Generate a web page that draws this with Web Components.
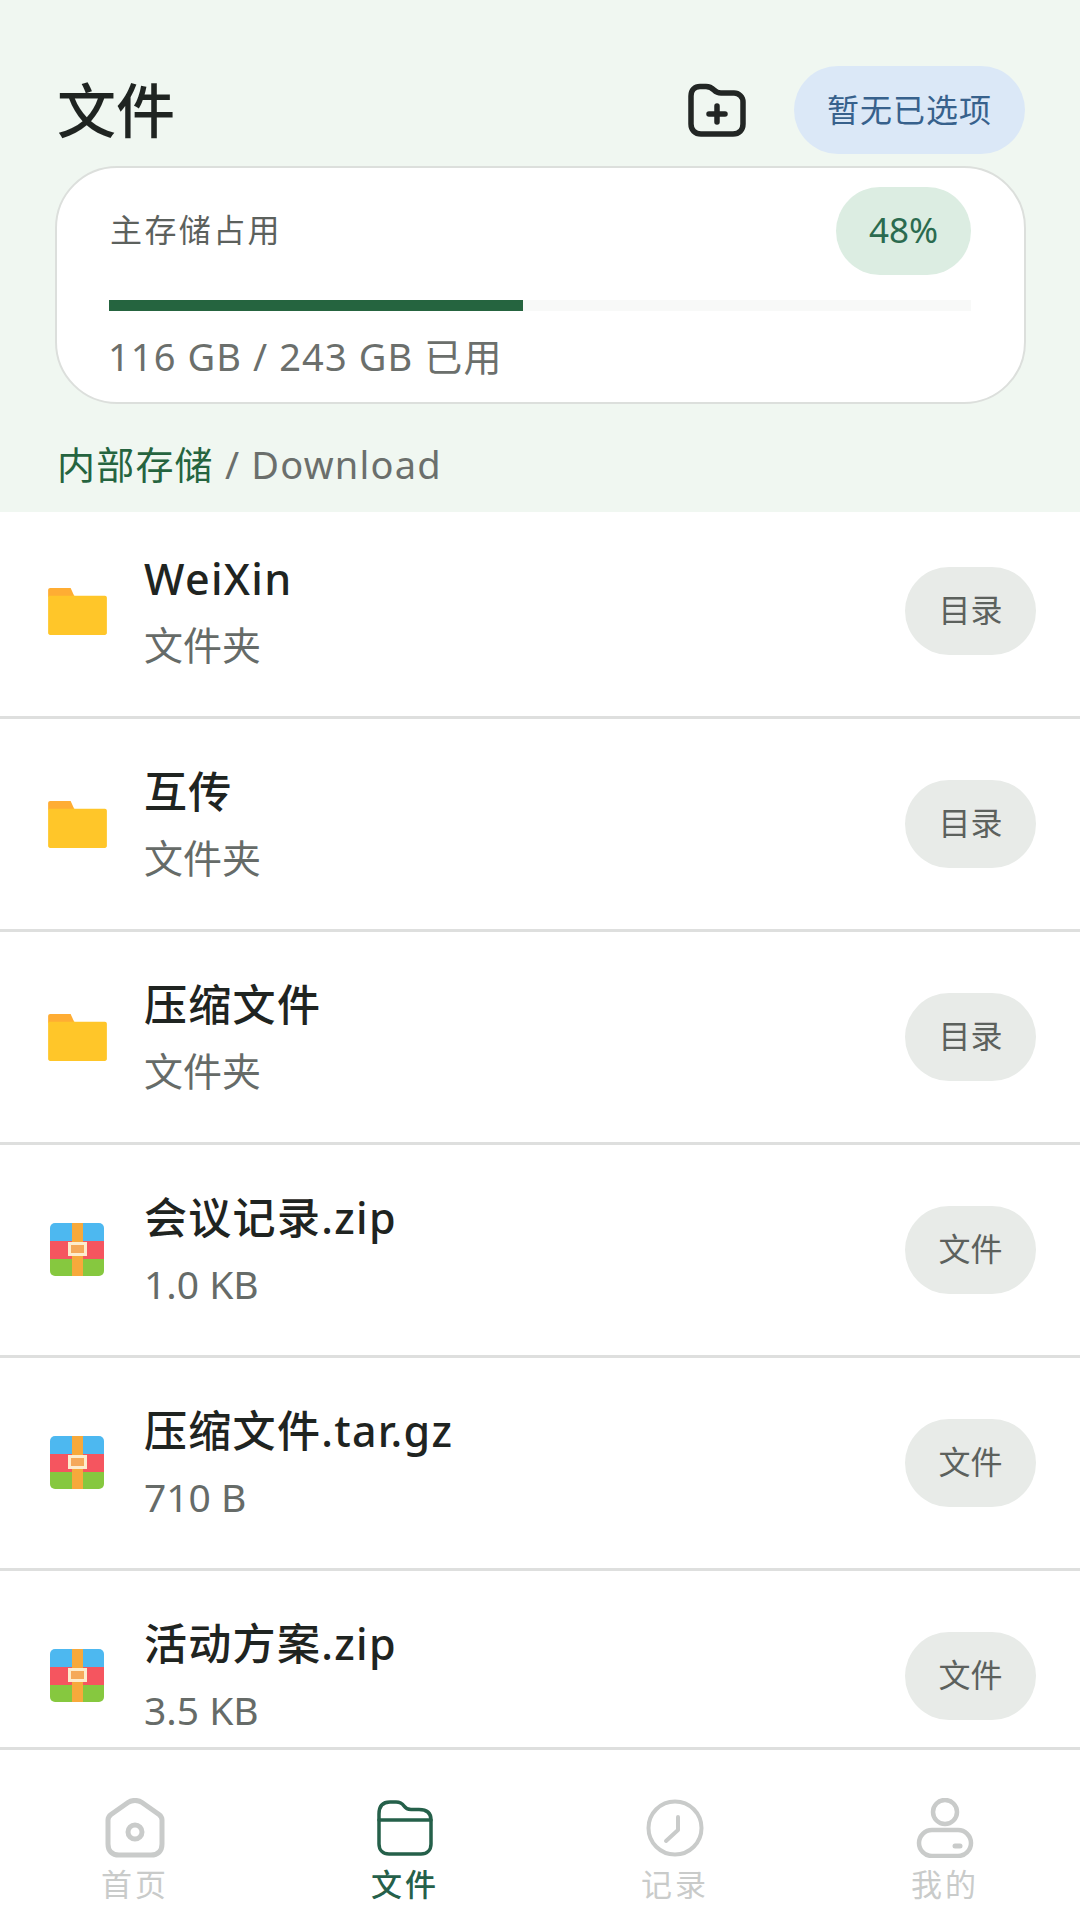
<!DOCTYPE html>
<html lang="zh-CN">
<head>
<meta charset="utf-8">
<title>文件</title>
<style>
  html, body { margin: 0; padding: 0; background: #fff; }
  body { font-family: "Noto Sans", "Noto Sans CJK SC", sans-serif; }
</style>
</head>
<body>
<file-app>
  <file-header slot="header" used="116 GB / 243 GB 已用" percent="48"></file-header>
  <file-row type="folder" name="WeiXin" meta="文件夹" tag="目录"></file-row>
  <file-row type="folder" name="互传" meta="文件夹" tag="目录"></file-row>
  <file-row type="folder" name="压缩文件" meta="文件夹" tag="目录"></file-row>
  <file-row type="zip" name="会议记录.zip" meta="1.0 KB" tag="文件"></file-row>
  <file-row type="zip" name="压缩文件.tar.gz" meta="710 B" tag="文件"></file-row>
  <file-row type="zip" name="活动方案.zip" meta="3.5 KB" tag="文件"></file-row>
  <bottom-nav slot="nav"></bottom-nav>
</file-app>

<script>
const FONT = '"Noto Sans", "Noto Sans CJK SC", sans-serif';

class FileApp extends HTMLElement {
  constructor() {
    super();
    let shadowRoot = this.attachShadow({mode: 'open'});
    shadowRoot.innerHTML = `
    <style>
      :host { display: flex; flex-direction: column; width: 1080px; height: 1920px; overflow: hidden; background: #fff; font-family: ${FONT}; }
      .top { position: relative; z-index: 1; flex: none; }
      /* first row sits a bit under the header, like a scrolled list */
      .list { flex: 1; min-height: 0; overflow: hidden; margin-top: -6px; }
      .bottom { flex: none; position: relative; z-index: 1; }
    </style>
    <div class="top"><slot name="header"></slot></div>
    <div class="list"><slot></slot></div>
    <div class="bottom"><slot name="nav"></slot></div>
    `;
  }
}
customElements.define('file-app', FileApp);

class FileHeader extends HTMLElement {
  constructor() {
    super();
    let shadowRoot = this.attachShadow({mode: 'open'});
    let percent = this.getAttribute('percent');
    shadowRoot.innerHTML = `
    <style>
      :host { display: block; height: 512px; box-sizing: border-box; background: #f0f7f1; padding: 66px 55px 0 57px; }
      .bar { display: flex; align-items: center; height: 88px; }
      h1 { margin: 0; flex: 1; font-size: 59px; line-height: 84px; padding-bottom: 1px; font-weight: 500; color: #1f2421; }
      svg { display: block; margin-right: 47px; }
      .chosen { width: 231px; height: 88px; padding-bottom: 5px; box-sizing: border-box; border-radius: 44px; background: #dbe8f7; color: #37618c; font-size: 32px; letter-spacing: 1px; display: flex; align-items: center; justify-content: center; }
      .card { box-sizing: border-box; margin: 12px 0 0 -2px; width: 971px; height: 238px; border-radius: 62px; background: #fff; border: 2px solid #dcdfdc; padding: 19px 53px 0 52px; }
      .head { display: flex; align-items: center; justify-content: space-between; height: 88px; }
      .label { font-size: 32px; letter-spacing: 2.4px; color: #5c615d; margin-left: 1px; padding-bottom: 7px; }
      .pct { width: 135px; height: 88px; padding-bottom: 3px; box-sizing: border-box; border-radius: 44px; background: #dcede2; color: #2b6b4f; font-size: 35px; display: flex; align-items: center; justify-content: center; }
      .track { height: 11px; margin-top: 25px; background: #f8f9f8; }
      .fill { height: 100%; width: ${(523 - 109) / 862 * 100}%; background: #25643f; }
      .used { font-size: 38px; line-height: 50px; margin-top: 20px; margin-left: -1px; color: #6b6f6c; letter-spacing: 1.1px; }
      .crumb { margin: 35px 0 0 0; font-size: 38px; line-height: 50px; color: #6b6f6c; letter-spacing: 1.2px; }
      .crumb b { font-weight: 400; color: #25643f; }
    </style>
    <div class="bar">
      <h1>文件</h1>
      <svg width="60" height="55" viewBox="0 0 60 55" fill="none" stroke="#222624" stroke-width="5.5" stroke-linecap="round" stroke-linejoin="round">
        <path d="M4 13C4 7 8 3.5 13 3.5H19C23 3.5 25 5 27 7C29 9 31 10 34 10H47C52 10 56 14 56 19V41C56 47 52 51 46 51H14C8 51 4 47 4 41Z"/>
        <path d="M22 31H38M30 23V39"/>
      </svg>
      <div class="chosen">暂无已选项</div>
    </div>
    <div class="card">
      <div class="head"><span class="label">主存储占用</span><span class="pct">${percent}%</span></div>
      <div class="track"><div class="fill"></div></div>
      <div class="used">${this.getAttribute('used')}</div>
    </div>
    <div class="crumb"><b>内部存储</b> / Download</div>
    `;
  }
}
customElements.define('file-header', FileHeader);

const FOLDER_ICON = `
  <svg width="59" height="47" viewBox="0 0 60 48">
    <path d="M0 2C0 1 1 0 2 0H23L27 9H0Z" fill="#ffad33"/>
    <path d="M0 8H26L25 6L27 8H58C59 8 60 9 60 10V46C60 47 59 48 58 48H2C1 48 0 47 0 46Z" fill="#ffc629"/>
  </svg>`;

const ZIP_ICON = `
  <svg width="54" height="53" viewBox="0 0 54 53">
    <defs><clipPath id="r"><rect width="54" height="53" rx="5"/></clipPath></defs>
    <g clip-path="url(#r)">
      <rect width="54" height="18" fill="#4db8f0"/>
      <rect y="18" width="54" height="18" fill="#f5555f"/>
      <rect y="36" width="54" height="17" fill="#86c83f"/>
      <rect x="22" width="11" height="53" fill="#f7a93b"/>
    </g>
    <rect x="19.5" y="20.5" width="16" height="11" fill="#f5a95a" stroke="#fdeccd" stroke-width="3"/>
  </svg>`;

class FileRow extends HTMLElement {
  constructor() {
    super();
    let shadowRoot = this.attachShadow({mode: 'open'});
    let isFolder = this.getAttribute('type') === 'folder';
    shadowRoot.innerHTML = `
    <style>
      :host { display: flex; align-items: center; box-sizing: border-box; height: 213px; border-bottom: 3px solid #dedfde; padding: 0 44px 0 ${isFolder ? 48 : 50}px; }
      .icon { width: ${isFolder ? 96 : 94}px; flex: none; margin-top: ${isFolder ? 0 : -2}px; }
      .icon svg { display: block; }
      .text { flex: 1; min-width: 0; margin-top: -3px; }
      .name { font-size: 43px; line-height: 60px; font-weight: 500; color: #1f2421; letter-spacing: 1.3px; }
      .meta { font-size: 39px; line-height: 50px; margin-top: 11px; color: #666b68; }
      .tag { width: 131px; height: 88px; padding-bottom: 6px; box-sizing: border-box; border-radius: 44px; background: #e8ebe8; color: #5c615d; font-size: 32px; display: flex; align-items: center; justify-content: center; }
    </style>
    <div class="icon">${isFolder ? FOLDER_ICON : ZIP_ICON}</div>
    <div class="text">
      <div class="name">${this.getAttribute('name')}</div>
      <div class="meta">${this.getAttribute('meta')}</div>
    </div>
    <div class="tag">${this.getAttribute('tag')}</div>
    `;
  }
}
customElements.define('file-row', FileRow);

class NavItem extends HTMLElement {
  constructor() {
    super();
    let shadowRoot = this.attachShadow({mode: 'open'});
    let active = this.hasAttribute('active');
    shadowRoot.innerHTML = `
    <style>
      :host { display: flex; flex-direction: column; align-items: center; flex: 1; color: ${active ? '#25604a' : '#c9cbca'}; }
      .ico { height: 62px; display: flex; align-items: center; justify-content: center; }
      ::slotted(svg) { display: block; }
      .txt { font-size: 31px; line-height: 40px; letter-spacing: 3px; margin-top: 5px; font-weight: ${active ? 500 : 400}; }
    </style>
    <div class="ico"><slot></slot></div>
    <div class="txt">${this.getAttribute('label')}</div>
    `;
  }
}
customElements.define('nav-item', NavItem);

class BottomNav extends HTMLElement {
  constructor() {
    super();
    let shadowRoot = this.attachShadow({mode: 'open'});
    shadowRoot.innerHTML = `
    <style>
      :host { display: flex; box-sizing: border-box; height: 173px; padding-top: 47px; background: #fff; border-top: 3px solid #dedfde; }
    </style>
    <nav-item label="首页">
      <svg width="60" height="60" viewBox="0 0 60 60" fill="none" stroke="currentColor" stroke-width="5" stroke-linejoin="round">
        <path d="M3 22C3 19.500 4 18 6 16.500L23 4.500C27 1.700 33 1.700 37 4.500L54 16.500C56 18 57 19.500 57 22V46C57 53 53 57 46 57H14C7 57 3 53 3 46Z"/>
        <circle cx="30" cy="34" r="7"/>
      </svg>
    </nav-item>
    <nav-item label="文件" active>
      <svg width="56" height="56" viewBox="0 0 56 56" fill="none" stroke="currentColor" stroke-width="3.500" stroke-linecap="round" stroke-linejoin="round">
        <path d="M2 14C2 6 6 2 13 2H19C23 2 25 3 27 6C29 9 31 9.500 34 9.500H42C50 9.500 54 13 54 20V44C54 50 50 54 44 54H12C6 54 2 50 2 44Z"/>
        <path d="M2 20H54"/>
      </svg>
    </nav-item>
    <nav-item label="记录">
      <svg width="58" height="58" viewBox="0 0 58 58" fill="none" stroke="currentColor" stroke-width="4" stroke-linecap="round" stroke-linejoin="round">
        <circle cx="29" cy="29" r="26.500"/>
        <path d="M32 18V31L20 42"/>
      </svg>
    </nav-item>
    <nav-item label="我的">
      <svg width="58" height="60" viewBox="0 0 58 60" fill="none" stroke="currentColor" stroke-width="4.500" stroke-linecap="round" stroke-linejoin="round">
        <circle cx="29" cy="14" r="12"/>
        <rect x="3" y="32" width="52" height="26" rx="13"/>
        <path d="M39 48H44" stroke-width="5"/>
      </svg>
    </nav-item>
    `;
  }
}
customElements.define('bottom-nav', BottomNav);
</script>
</body>
</html>
